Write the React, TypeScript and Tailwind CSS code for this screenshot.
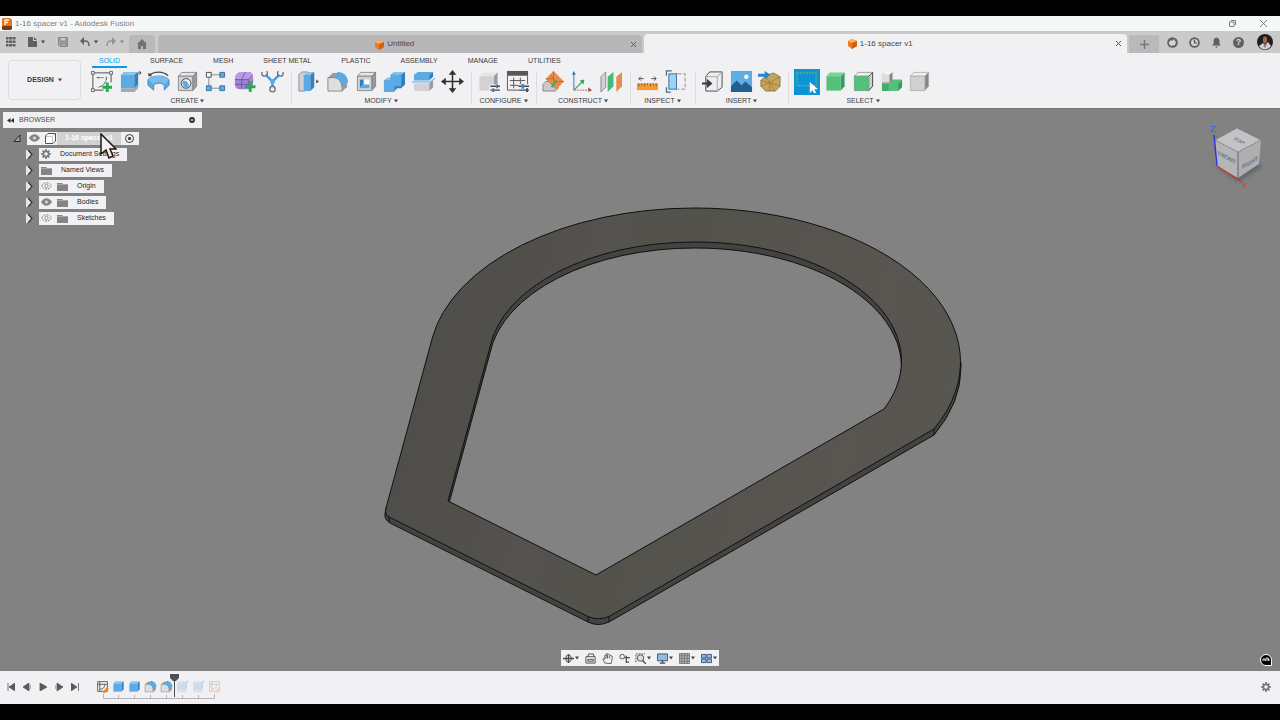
import type { ReactNode } from "react";

const INK = "#4a4a4c";

type IconProps = { children: ReactNode; className?: string; box?: string };

function Svg({ children, className = "size-6", box = "0 0 24 24" }: IconProps) {
  return (
    <svg viewBox={box} className={`${className} shrink-0`} fill="none" aria-hidden="true">
      {children}
    </svg>
  );
}

type CubeProps = { top: string; front: string; side: string; stroke?: string };

function Cube({ top, front, side, stroke = "none" }: CubeProps) {
  return (
    <g stroke={stroke} strokeWidth="0.8" strokeLinejoin="round">
      <path d="M2.500 6.500 6 2.500H21.500L17.500 6.500Z" fill={top} />
      <path d="M17.500 6.500 21.500 2.500V17L17.500 21.500Z" fill={side} />
      <path d="M2.500 6.500H17.500V21.500H2.500Z" fill={front} />
    </g>
  );
}

const GREY = { top: "#e6e6e8", front: "#d2d2d4", side: "#9c9c9e" };
const BLUE = { top: "#86c3ee", front: "#5baae4", side: "#357fbd" };
const GREEN = { top: "#76d497", front: "#55bf7c", side: "#379f5d" };

const icons: Record<string, ReactNode> = {
  sketch: (
    <>
      <path d="M3 20V3h19v10M3 21h11" stroke={INK} strokeWidth="1" />
      <path d="M7 8h7M17 7c1 5-4 11-9 11" stroke={INK} strokeWidth="1" strokeDasharray="4 1" />
      <path d="M1.500 1.500h3v3h-3zM20.500 1.500h3v3h-3zM1.500 19.500h3v3h-3z" fill="#f1f1f3" stroke={INK} strokeWidth="0.8" />
      <path d="M18 13v10M13 18h10" stroke="#27ae4c" strokeWidth="3" />
    </>
  ),
  extrude: (
    <>
      <path d="M2 19h14l4-4v4l-4 4H2Z" fill="#a9a9ab" />
      <path d="M2 5 5 2h15l-4 3Z" fill="#86c3ee" />
      <path d="M2 5h14v14H2Z" fill="#5baae4" />
      <path d="m16 5 4-3v13l-4 4Z" fill="#357fbd" />
      <path d="M20 3h3M21 1l2 2-2 2" stroke={INK} />
    </>
  ),
  revolve: (
    <>
      <path d="M2 6C7 1 17 1 22 6M2 3v3h3" stroke={INK} strokeWidth="1.200" />
      <path d="M1 10c5-5 17-5 22 0v6l-5 5v-5c-3-3-8-3-11 0v5l-6-5Z" fill="#5baae4" stroke="#357fbd" strokeWidth="0.8" />
      <path d="M1 10c5-5 17-5 22 0l-5 5c-3-3-8-3-11 0Z" fill="#79bbea" />
    </>
  ),
  hole: (
    <>
      <Cube {...GREY} stroke="#77777a" />
      <circle cx="10.500" cy="14" r="5" fill="#f4f4f5" stroke={INK} />
      <path d="M7 11c5 0 7 3 6 7-4 2-7-2-6-7Z" fill="#5baae4" />
    </>
  ),
  pattern: (
    <>
      <path d="M7 5h10M5 7v10M7 19h10" stroke="#8b8b8d" />
      <path d="M2.500 2.500h5v5h-5z" fill="#f6f6f6" stroke={INK} />
      <path d="M16.500 2.500h5v5h-5zM2.500 16.500h5v5h-5zM16.500 16.500h5v5h-5z" fill="#5baae4" stroke="#3773a0" />
    </>
  ),
  form: (
    <>
      <path d="M2 10c0-5 3-8 7-8h7c3 0 5 2 5 5v7c0 3-3 6-6 6H7c-3 0-5-2-5-5Z" fill="#a083d2" />
      <path d="M2 10c0-5 3-8 7-8h7c3 0 5 2 5 5-1 0-3 3-5 3Z" fill="#b89be2" />
      <path d="M2 10h14l4-4M9 10v10M16 10v10M9 10l4-8M2 15h14l5-3" stroke="#65509a" strokeWidth="0.8" />
      <path d="M18 12v11M12.500 17.500h11" stroke="#27ae4c" strokeWidth="3" />
    </>
  ),
  derive: (
    <>
      <path d="m5 5 7 7 7-7M12 12v6" stroke="#4a98d5" strokeWidth="2.500" />
      <circle cx="12" cy="12" r="2.500" fill="#5baae4" />
      <circle cx="12" cy="20" r="2.800" fill="#eee" stroke="#5d6f7f" strokeWidth="1.300" />
      <path d="M1 2c-1 4 2 5 4 4s2-3 1-5M23 2c1 4-2 5-4 4s-2-3-1-5" stroke="#667" strokeWidth="1.300" />
    </>
  ),
  presspull: (
    <>
      <path d="M2 5 5 2h6v16l-3 4H2Z" fill="#d2d2d4" stroke="#77777a" strokeWidth="0.800" />
      <path d="M7 5h7v17H7Z" fill="#5baae4" />
      <path d="m7 5 4-3h7l-4 3Z" fill="#86c3ee" />
      <path d="m14 5 4-3v16l-4 4Z" fill="#357fbd" />
      <path d="m20 10 3 2-3 2Z" fill={INK} />
    </>
  ),
  fillet: (
    <>
      <path d="M2 8 7 3h5l10 12v3l-5 4H2Z" fill="#9c9c9e" />
      <path d="M2 8h6c6 0 9 5 9 14H2Z" fill="#dededf" stroke="#77777a" strokeWidth="0.800" />
      <path d="M8 8 12 2c7 0 11 5 11 11l-5 4C17 12 14 8 8 8Z" fill="#5baae4" />
    </>
  ),
  shell: (
    <>
      <Cube {...GREY} stroke="#77777a" />
      <path d="M5 10h10v9H5Z" fill="#fafafa" />
      <path d="M5 10h4v5l-4 4Z" fill="#357fbd" />
      <path d="m5 19 4-4h6v4Z" fill="#5baae4" />
    </>
  ),
  combine: (
    <>
      <path d="m8 5 4-3h11v13l-4 4h-4l-4 4H1V11l4-3h3Z" fill="#357fbd" />
      <path d="M1 11h7V5h11v12h-7v6H1Z" fill="#5baae4" />
      <path d="m1 11 4-3h3V5l4-3h11l-4 3H8v6Z" fill="#86c3ee" />
    </>
  ),
  split: (
    <>
      <path d="m2 5 4-3h16l-4 3v6H2Z" fill="#5baae4" />
      <path d="m18 5 4-3v5l-4 4Z" fill="#357fbd" />
      <path d="M2 14h16v8H2Z" fill="#d2d2d4" />
      <path d="m18 14 4-4v8l-4 4Z" fill="#9c9c9e" />
      <path d="M0 12.500h19l5-4" stroke="#5baae4" />
    </>
  ),
  move: (
    <>
      <path d="M12 3v18M3 12h18" stroke="#303032" strokeWidth="1.600" />
      <path d="m12 0 4 5H8ZM12 24l4-5H8ZM0 12l5-4v8ZM24 12l-5-4v8Z" fill="#303032" />
    </>
  ),
  configure: (
    <>
      <Cube {...GREY} />
      <path d="M13 15h11v9H13z" fill="#f1f1f3" />
      <path d="M14 17h10M14 21h10" stroke={INK} strokeWidth="1.400" />
      <path d="M20 15h2v4h-2zM16 19h2v4h-2z" fill="#397cb1" />
    </>
  ),
  table: (
    <>
      <path d="M1 1h22v5H1Z" fill="#58585a" />
      <path d="M1.500 6v15H13M22.500 6v9M4 11h16M4 16h10M8 8v11M15 8v7" stroke="#58585a" />
      <path d="M13 15h11v9H13z" fill="#f1f1f3" />
      <path d="M13 17h11M13 21h11" stroke={INK} strokeWidth="1.400" />
      <path d="M16 14.500h3v5h-3z" fill="#3492d4" />
      <path d="M21 19h2v4h-2z" fill={INK} />
    </>
  ),
  plane: (
    <>
      <path d="m1 15 3-3h8l5 5v2l-3 3H1Z" fill="#cacacc" stroke="#77777a" strokeWidth="0.800" />
      <path d="m12 1 11 11-8 8L4 9Z" fill="#e88c50" />
      <path d="m4 9 11 11M8 5l11 11M12 1v11l11 0M4 9h8" stroke="#b56532" strokeWidth="0.700" />
      <path d="m10 18 5-7" stroke="#36a960" strokeWidth="2" />
    </>
  ),
  axis: (
    <>
      <path d="M3 21V3" stroke="#3275b8" />
      <path d="m1 5 2-4 2 4Z" fill="#3275b8" />
      <path d="m3 21 9-9" stroke="#36a960" strokeWidth="1.300" />
      <path d="m9 11 5-1-1 5Z" fill="#36a960" />
      <path d="M3 21h15" stroke="#8c6d68" strokeDasharray="2 1" />
      <path d="m18 18 4 3-4 2Z" fill="#a9493c" />
    </>
  ),
  midplane: (
    <>
      <path d="m1 7 5-5v16l-5 5Z" fill="#d2d2d4" stroke="#77777a" strokeWidth="0.800" />
      <path d="m8 7 6-5v15l-6 6Z" fill="#46b877" />
      <path d="m17 7 6-5v15l-6 6Z" fill="#e88c50" />
    </>
  ),
  measure: (
    <>
      <path d="M3 9h5m8 0h5M5 7 3 9l2 2M19 7l2 2-2 2" stroke={INK} />
      <path d="M1 14h22v7H1Z" fill="#f29b38" />
      <path d="M3 14v3m3-3v2m3-2v3m3-3v2m3-2v3m3-3v2m3-2v3" stroke="#91551a" />
    </>
  ),
  section: (
    <>
      <path d="M7 1H1.500v5M1.500 18v5H6" stroke="#476c8c" strokeWidth="1.300" />
      <path d="M4 4h8v16H4Z" fill="#9fd0f2" stroke="#3773a0" />
      <path d="M13 4h8v16h-8" stroke="#8b8b8d" strokeDasharray="4 2" />
      <path d="M12 3v18" stroke="#447ca9" />
    </>
  ),
  insert: (
    <>
      <path d="m5 7 4-5h13v16l-5 4H5Z" fill="#eeeef0" stroke={INK} />
      <path d="M6 7h11v15M17 7l5-5" stroke="#a5a5a7" />
      <path d="M1 13h5V9l6 5-6 5v-4H1Z" fill="#3c3c3e" />
    </>
  ),
  canvas: (
    <>
      <path d="M1 1h22v22H1Z" fill="#5faee3" />
      <path d="m1 17 6-6 5 5 4-4 7 6v5H1Z" fill="#235f91" />
      <circle cx="17" cy="7" r="2.300" fill="#eff8fc" />
    </>
  ),
  mesh: (
    <>
      <path d="m8 6 8-3 7 4v10l-5 5H8l-5-5v-6Z" fill="#c7a45c" stroke="#7b6536" strokeWidth="0.800" />
      <path d="m3 11 9 2 11-6M12 13v9M8 6l4 7 6 9M12 13l11 4M12 13l-9 4" stroke="#8f743b" strokeWidth="0.700" />
      <path d="M0 4h7V1l6 4-6 5V7H0Z" fill="#2788d1" />
    </>
  ),
  select: (
    <>
      <path d="M1 2h21v14H1Z" stroke="#6db66b" strokeWidth="1.200" strokeDasharray="2 1.300" />
      <path d="M15 12v12l3-3 2 4 2-1-2-4h4Z" fill="#fff" />
    </>
  ),
  body: <Cube {...GREEN} />,
  face: (
    <>
      <Cube top="#f2f2f2" front="#55bf7c" side="#d0d0d2" stroke="#8b8b8d" />
      <path d="M2.500 6.500h15v15h-15Z" fill="#55bf7c" />
      <path d="M17.500 6.500 21.500 2.500V17l-4 4.500" stroke="#505052" />
    </>
  ),
  component: (
    <>
      <path d="m2 5 3-3h8v9l-3 3H2Z" fill="#858587" />
      <path d="M2 5h8v8H2Z" fill="#ddddde" />
      <path d="m2 5 3-3h8l-3 3Z" fill="#f5f5f5" />
      <path d="M2 14h20v4l-4 4H2Z" fill="#45ad6c" />
      <path d="m9 14 4-4h10l-4 4v8H9Z" fill="#55bf7c" />
      <path d="m19 14 4-4v8l-4 4Z" fill="#379f5d" />
    </>
  ),
  edge: <Cube top="#eeeeef" front="#d0d2d2" side="#858587" stroke="#aaaaac" />,
};

type Group = { name: string; width: string; tools: [string, string][] };

const groups: Group[] = [
  {
    name: "CREATE",
    width: "w-[195px]",
    tools: [["sketch", "Create Sketch"], ["extrude", "Extrude"], ["revolve", "Revolve"], ["hole", "Hole"], ["pattern", "Pattern"], ["form", "Create Form"], ["derive", "Derive"]],
  },
  {
    name: "MODIFY",
    width: "w-[168px]",
    tools: [["presspull", "Press Pull"], ["fillet", "Fillet"], ["shell", "Shell"], ["combine", "Combine"], ["split", "Split Body"], ["move", "Move"]],
  },
  { name: "CONFIGURE", width: "w-[53px]", tools: [["configure", "Configure"], ["table", "Configuration Table"]] },
  { name: "CONSTRUCT", width: "w-[82px]", tools: [["plane", "Offset Plane"], ["axis", "Axis"], ["midplane", "Midplane"]] },
  { name: "INSPECT", width: "w-[53px]", tools: [["measure", "Measure"], ["section", "Section Analysis"]] },
  { name: "INSERT", width: "w-[81px]", tools: [["insert", "Insert Derive"], ["canvas", "Canvas"], ["mesh", "Insert Mesh"]] },
  { name: "SELECT", width: "w-[138px]", tools: [["select", "Select"], ["body", "Select Body"], ["face", "Select Face"], ["component", "Select Component"], ["edge", "Select Edge"]] },
];

const workspaceTabs = ["SOLID", "SURFACE", "MESH", "SHEET METAL", "PLASTIC", "ASSEMBLY", "MANAGE", "UTILITIES"];

function Caret({ className = "size-1" }: { className?: string }) {
  return (
    <Svg className={className} box="0 0 4 4">
      <path d="M0 .5h4L2 3.500Z" fill="#444446" />
    </Svg>
  );
}

function Logo() {
  return (
    <Svg className="size-[11px]" box="0 0 11 11">
      <path d="m1 3 4-2 5 2v5l-5 3-4-3Z" fill="#ee7b22" />
      <path d="m1 3 4-2 5 2-5 2Z" fill="#ffae62" />
      <path d="M5 5v6l5-3V3Z" fill="#d5600f" />
    </Svg>
  );
}

function TitleBar() {
  return (
    <header className="flex h-[15px] items-center bg-[#f6f8f8] px-[2px] text-[8px] text-[#7c7c7e]">
      <Svg className="mr-[3px] h-3 w-[10px]" box="0 0 10 12">
        <path d="M1 0h7l2 2v9l-2 1H1L0 11V1Z" fill="#e97416" />
        <path d="M0 8h10v3l-2 1H1l-1-1Z" fill="#753817" />
        <path d="M3 7V2h4M3 4.500h3" stroke="#fff1df" strokeWidth="1.300" />
      </Svg>
      <h1 className="flex-1">1-16 spacer v1 - Autodesk Fusion</h1>
      <button aria-label="Restore" className="mr-6">
        <Svg className="size-[7px]" box="0 0 7 7">
          <path d="M.5 2h4.500v4.500H.5ZM2 .5h4.500V5" stroke="#737375" strokeWidth="0.900" />
        </Svg>
      </button>
      <button aria-label="Close" className="mr-[11px]">
        <Svg className="size-[7px]" box="0 0 7 7">
          <path d="m0 0 7 7M7 0 0 7" stroke="#737375" strokeWidth="0.900" />
        </Svg>
      </button>
    </header>
  );
}

function DocumentBar() {
  return (
    <div className="flex h-[22px] items-end bg-[#cacacb]">
      <div className="flex h-full w-[129px] shrink-0 items-center pl-[6px]">
        <button aria-label="Show Data Panel">
          <Svg className="size-[10px]" box="0 0 10 10">
            <path d="M0 0h2.500v2.500H0zM3 0H6v2.500H3zM6.500 0h3v2.500h-3zM0 3.500h2.500V6H0zM3 3.500H6V6H3zM6.500 3.500h3V6h-3zM0 7h2.500v2.500H0zM3 7H6v2.500H3zM6.500 7h3v2.500h-3z" fill="#606062" />
          </Svg>
        </button>
        <button aria-label="File" className="ml-3 flex items-center gap-1">
          <Svg className="h-[10px] w-[9px]" box="0 0 9 10">
            <path d="M0 0h5v4h4v6H0Zm6 0 3 3H6Z" fill="#606062" />
          </Svg>
          <Caret />
        </button>
        <button aria-label="Save" className="ml-[13px]">
          <Svg className="size-[10px]" box="0 0 10 10">
            <path d="M.5.5h9v9H2L.5 8ZM2 1v3h6V1M3 9V6h5v3" fill="#a8a8aa" stroke="#858587" />
          </Svg>
        </button>
        <button aria-label="Undo" className="ml-3 flex items-center gap-1">
          <Svg className="size-[10px]" box="0 0 10 10">
            <path d="M1 4h4c3 0 4 1 4 5" stroke="#606062" strokeWidth="1.500" />
            <path d="M0 4 4 0v8Z" fill="#606062" />
          </Svg>
          <Caret />
        </button>
        <button aria-label="Redo" className="ml-2 flex items-center gap-1 opacity-50">
          <Svg className="size-[10px]" box="0 0 10 10">
            <path d="M9 4H5C2 4 1 5 1 9" stroke="#606062" strokeWidth="1.500" />
            <path d="M10 4 6 0v8Z" fill="#606062" />
          </Svg>
          <Caret />
        </button>
      </div>
      <button aria-label="Home" className="flex h-[18px] w-[26px] items-center justify-center rounded-t-sm bg-[#b9b9bb]">
        <Svg className="size-[10px]" box="0 0 10 10">
          <path d="m0 5 5-5 5 5H9v5H6V7H4v3H1V5Z" fill="#707072" />
        </Svg>
      </button>
      <nav className="ml-[3px] flex flex-1 items-end gap-[2px] text-[8px] text-[#48484a]">
        <div className="flex h-[18px] flex-1 items-center rounded-t-sm bg-[#b7b7b9] pr-[6px]">
          <a href="#untitled" className="flex flex-1 items-center justify-center gap-[2px]">
            <Logo /> Untitled
          </a>
          <button aria-label="Close Untitled" className="leading-none">
            <Svg className="size-[5px]" box="0 0 5 5"><path d="m0 0 5 5M5 0 0 5" stroke="#59595b" /></Svg>
          </button>
        </div>
        <div className="flex h-[19px] flex-1 items-center rounded-t-sm bg-[#f1f1f3] pr-[6px]">
          <a href="#spacer" aria-current="page" className="flex flex-1 items-center justify-center gap-[2px]">
            <Logo /> 1-16 spacer v1
          </a>
          <button aria-label="Close 1-16 spacer v1" className="leading-none">
            <Svg className="size-[5px]" box="0 0 5 5"><path d="m0 0 5 5M5 0 0 5" stroke="#59595b" /></Svg>
          </button>
        </div>
      </nav>
      <button aria-label="New design" className="ml-[2px] flex h-[18px] w-[30px] items-center justify-center bg-[#b9b9bb]">
        <Svg className="size-[9px]" box="0 0 9 9"><path d="M0 4.500h9M4.500 0v9" stroke="#77777a" strokeWidth="1.500" /></Svg>
      </button>
      <div className="ml-2 flex h-full w-[113px] shrink-0 items-center gap-[11px]">
        <button aria-label="Extensions">
          <Svg className="size-[11px]" box="0 0 11 11">
            <circle cx="5.500" cy="5.500" r="5.300" fill="#606062" />
            <path d="M2 5 4 3l1 1 2-2 1 2 1 1-1 3-4 1-2-2Z" fill="#d4d4d4" />
          </Svg>
        </button>
        <button aria-label="Job Status">
          <Svg className="size-[11px]" box="0 0 11 11">
            <circle cx="5.500" cy="5.500" r="5.300" fill="#606062" />
            <circle cx="5.500" cy="5.500" r="3.500" fill="#d4d4d4" />
            <path d="M5.500 2.500V6H8" stroke="#505052" strokeWidth="1.200" />
          </Svg>
        </button>
        <button aria-label="Notifications">
          <Svg className="size-[11px]" box="0 0 11 11">
            <path d="M1 8.500 2.500 7V4c0-2 1-3 3-3.500 2 .5 3 1.500 3 3.500v3L10 8.500ZM4 9.500h3L5.500 11Z" fill="#606062" />
          </Svg>
        </button>
        <button aria-label="Help" className="flex size-[11px] items-center justify-center rounded-full bg-[#606062] text-[9px] leading-none font-bold text-[#dededf]">
          ?
        </button>
        <button aria-label="Account" className="ml-[2px]">
          <Svg className="size-4" box="0 0 16 16">
            <circle cx="8" cy="8" r="8" fill="#241d1d" />
            <path d="M6 4c1-2 4-2 4 1v3L8 10 6 8Z" fill="#9f654e" />
            <path d="m2 12 4-3 2 2 3-3 3 4c-3 4-9 5-12 0Z" fill="#d5d0ce" />
            <path d="m6 11 2 3 2-4Z" fill="#8d776d" />
          </Svg>
        </button>
      </div>
    </div>
  );
}

function Ribbon() {
  return (
    <div className="flex h-14 items-start border-b border-[#77777a] bg-[#f1f1f3] text-[7px] text-[#39393b]">
      <button className="mt-[7px] ml-2 flex h-10 w-[73px] shrink-0 items-center justify-center gap-1 rounded-sm border border-[#dcdcde] font-bold">
        DESIGN <Caret />
      </button>
      <div className="ml-[9px] flex flex-col">
        <nav className="ml-[2px] flex h-[15px] gap-4">
          {workspaceTabs.map((tab, i) => (
            <a
              key={tab}
              href="#ribbon"
              className={
                i === 0
                  ? "border-b-2 border-[#109bd7] px-[7px] leading-[15px] text-[#109bd7]"
                  : "border-b-2 border-transparent px-[7px] leading-[15px] whitespace-nowrap"
              }
            >
              {tab}
            </a>
          ))}
        </nav>
        <div className="flex">
          {groups.map((group, i) => (
            <div key={group.name} className="flex">
              {i > 0 && <div className="mt-[3px] mr-[5px] ml-[6px] h-[34px] w-px bg-[#dddddf]" />}
              <div className={`${group.width} flex flex-col items-center`}>
                <div className="flex h-[27px] w-full items-center justify-between">
                  {group.tools.map(([icon, label]) => (
                    <button
                      key={icon}
                      aria-label={label}
                      className={icon === "select" ? "flex h-[26px] w-[26px] items-center justify-center bg-[#0e94d6]" : "flex size-6"}
                    >
                      <Svg className={icon === "select" ? "size-[22px]" : "size-[23px]"}>{icons[icon]}</Svg>
                    </button>
                  ))}
                </div>
                <button className="flex h-3 items-center gap-[2px] leading-3">
                  {group.name} <Caret />
                </button>
              </div>
            </div>
          ))}
        </div>
      </div>
    </div>
  );
}

const OUTER_TOP =
  "M432 339A266 154 0 0 1 695 208A266 154 0 0 1 934 429L609 616.500Q598 621 588 616.500L389 517Q384 514 386 508Z";
const OUTER_SIDE =
  "M386 508 385 514Q384 519 390 523L588 622Q598 627 609 622L934 435A266 154 0 0 0 961 367V362Z";
const INNER = "M490 347A206 119 0 0 1 695 242A206 119 0 0 1 884 409L596 575 448 501Z";

function Model() {
  return (
    <svg viewBox="0 109 1280 562" preserveAspectRatio="xMidYMid slice" className="absolute inset-0 size-full" role="img" aria-label="Spacer model">
      <defs>
        <linearGradient id="face" gradientUnits="userSpaceOnUse" x1="420" y1="300" x2="950" y2="440">
          <stop offset="0" stopColor="#4f4e4b" />
          <stop offset="0.150" stopColor="#514f4a" />
          <stop offset="0.300" stopColor="#55524f" />
          <stop offset="0.480" stopColor="#53524b" />
          <stop offset="0.650" stopColor="#575450" />
          <stop offset="0.820" stopColor="#595550" />
          <stop offset="1" stopColor="#575650" />
        </linearGradient>
        <clipPath id="opening">
          <path d={INNER} />
        </clipPath>
      </defs>
      <path d={OUTER_SIDE} fill="#434342" stroke="#101010" />
      <path d={OUTER_TOP} fill="url(#face)" stroke="#101010" />
      <path d="M588 617v5M609 617v5M934 429v6M389 517v5" stroke="#101010" />
      <g clipPath="url(#opening)">
        <path d={INNER} fill="#434342" />
        <path d={INNER} transform="translate(0 6)" fill="#828283" stroke="#101010" />
      </g>
      <path d={INNER} fill="none" stroke="#101010" />
    </svg>
  );
}

function Eye({ hidden = false }: { hidden?: boolean }) {
  return (
    <Svg className="h-2 w-[11px]" box="0 0 11 8">
      <path d="M.5 4C3-.3 8-.3 10.500 4 8 8.300 3 8.300.5 4Z" fill={hidden ? "none" : "#858587"} stroke="#858587" strokeDasharray={hidden ? "2 1" : undefined} />
      <circle cx="5.500" cy="4" r="1.700" fill={hidden ? "none" : "#eee"} stroke="#858587" strokeWidth="0.800" />
    </Svg>
  );
}

function Folder() {
  return (
    <Svg className="h-[9px] w-[11px]" box="0 0 11 9">
      <path d="M0 1h5l1 1h5v7H0Z" fill="#858587" />
      <path d="M0 2.500h11" stroke="#b9b9bb" strokeWidth="0.700" />
    </Svg>
  );
}

function Gear({ className = "size-[10px]" }: { className?: string }) {
  return (
    <Svg className={className} box="0 0 12 12">
      <path d="M6 0v12M0 6h12M1.800 1.800l8.400 8.400M10.200 1.800l-8.400 8.400" stroke="#77777a" strokeWidth="2" />
      <circle cx="6" cy="6" r="3.200" fill="#f1f1f3" stroke="#77777a" strokeWidth="2" />
    </Svg>
  );
}

type TreeItem = { label: string; icon: "gear" | "folder"; eye?: "on" | "off" };

const tree: TreeItem[] = [
  { label: "Document Settings", icon: "gear" },
  { label: "Named Views", icon: "folder" },
  { label: "Origin", icon: "folder", eye: "off" },
  { label: "Bodies", icon: "folder", eye: "on" },
  { label: "Sketches", icon: "folder", eye: "off" },
];

function Browser() {
  return (
    <aside className="absolute top-[3px] left-[3px] w-[199px] text-[7px] text-[#252527]">
      <div className="flex h-4 items-center bg-[#f1f1f3] px-1">
        <button aria-label="Collapse browser">
          <Svg className="h-[5px] w-[7px]" box="0 0 7 5"><path d="M3.500 0v5L0 2.500ZM7 0v5L3.500 2.500Z" fill="#303032" /></Svg>
        </button>
        <h2 className="ml-[5px] flex-1 text-[#4a4a4c]">BROWSER</h2>
        <button aria-label="Browser options" className="mr-[3px]">
          <Svg className="size-[6px]" box="0 0 6 6"><circle cx="3" cy="3" r="3" fill="#303032" /><path d="M1.500 3h3" stroke="#fff" /></Svg>
        </button>
      </div>
      <ul className="mt-[2px]">
        <li className="flex h-4 items-center">
          <button aria-label="Collapse component" className="ml-[10px]">
            <Svg className="size-2" box="0 0 8 8"><path d="M1 7.500h6V1Z" fill="#a5a5a7" stroke="#262628" /></Svg>
          </button>
          <div className="ml-[6px] flex h-[13px] items-center bg-[#f1f1f3] pl-[2px]">
            <Eye />
            <div className="ml-1 flex h-full items-center bg-[#d2d2d3]">
              <Svg className="size-[13px] bg-[#f1f1f3]" box="0 0 13 13">
                <path d="M1.500 4 4 1.500h7.500V9L9 11.500H1.500Z" fill="#fff" stroke="#515153" />
                <path d="M2 4.500h6.500V11M8.500 4.500l2.500-2.500" stroke="#b5b5b7" strokeWidth="0.700" />
              </Svg>
              <span className="px-2 font-bold whitespace-nowrap text-white">1-16 spacer v1</span>
            </div>
            <input type="radio" defaultChecked aria-label="Activate component" className="mr-[5px] ml-1 size-[9px] appearance-none rounded-full border border-[#39393b] bg-[radial-gradient(#39393b_25%,transparent_35%)]" />
          </div>
        </li>
        {tree.map((item) => (
          <li key={item.label} className="flex h-4 items-center pl-[22px]">
            <button aria-label={`Expand ${item.label}`}>
              <Svg className="h-[9px] w-2" box="0 0 8 9"><path d="M1 0h2l4 4.500L3 9H1Z" fill="#e5e5e7" /><path d="m3 0 4 4.500L3 9" stroke="#303032" strokeWidth="1.200" /></Svg>
            </button>
            <div className="ml-[6px] flex h-[13px] items-center bg-[#f1f1f3] pr-2 pl-[2px]">
              {item.eye && <span className="mr-[5px]"><Eye hidden={item.eye === "off"} /></span>}
              {item.icon === "gear" ? <Gear /> : <Folder />}
              <span className="ml-[9px] whitespace-nowrap">{item.label}</span>
            </div>
          </li>
        ))}
      </ul>
    </aside>
  );
}

function ViewCube() {
  return (
    <svg viewBox="0 0 70 76" className="absolute top-3 right-0 h-[76px] w-[70px]" role="img" aria-label="View cube">
      <defs>
        <filter id="soft" x="-20%" y="-20%" width="140%" height="140%">
          <feGaussianBlur stdDeviation="2" />
        </filter>
      </defs>
      <path d="m4 44 24 17 24-15-4-5Z" fill="#656567" filter="url(#soft)" />
      <path d="M27 7 51 19 28 31 5 19Z" fill="#c2c3c4" />
      <path d="M5 19 28 31V57L6 45Z" fill="#b4b5b6" />
      <path d="M51 19 28 31V57L49 43Z" fill="#aeafb0" />
      <path d="M27 7 51 19 28 31 5 19Z" fill="none" stroke="#77777a" strokeWidth="0.800" strokeDasharray="3 1" />
      <path d="M28 31v26" stroke="#666668" />
      <g fill="#707173" fontWeight="bold">
        <text transform="matrix(.86 .45 0 1 8 34)" fontSize="6">FRONT</text>
        <text transform="matrix(.86 -.48 0 1 32 48)" fontSize="6">RIGHT</text>
        <text transform="matrix(.86 .42 -.8 .42 22 18)" fontSize="6">TOP</text>
      </g>
      <path d="m4 14 3 31" stroke="#3036d5" strokeWidth="1.500" />
      <path d="m7 45 25 16" stroke="#c73535" strokeWidth="1.200" />
      <text x="0" y="11" fill="#4565dc" fontSize="9" fontWeight="bold">Z</text>
      <text x="32" y="67" fill="#d44747" fontSize="8" fontWeight="bold">X</text>
    </svg>
  );
}

const navTools: { name: string; menu: boolean; art: ReactNode }[] = [
  { name: "Orbit", menu: true, art: <><path d="M0 6h12M6 1v10" stroke={INK} strokeWidth="1.500" /><ellipse cx="6" cy="6" rx="3" ry="4" stroke={INK} /></> },
  { name: "Look At", menu: false, art: <><path d="M1 4h10v7H1ZM3 4l1-3h5l1 3M3 7h6v2H3Z" stroke={INK} /></> },
  { name: "Pan", menu: false, art: <path d="M3 11 1 7c0-1 1-1 2 0V3c0-1 1-1 1.500 0V1.500C5-.5 6 .5 6 1.500c1-1 2 0 2 1 1-1 2 0 2 1 1-1 1.500 0 1 3l-1 5ZM4.500 3v3M6 2v4M8 3v3" stroke={INK} strokeWidth="0.900" /> },
  { name: "Zoom", menu: false, art: <><circle cx="3.500" cy="4" r="2.500" stroke={INK} /><path d="M6 5h6M8 3v8M8 10h3" stroke={INK} strokeWidth="1.300" /></> },
  { name: "Fit", menu: true, art: <><path d="M1 10V1h10" stroke={INK} strokeDasharray="2 1" /><circle cx="6" cy="5.500" r="3.500" fill="#ddd" stroke={INK} /><path d="m8 8 4 4" stroke={INK} strokeWidth="1.500" /></> },
  { name: "Display Settings", menu: true, art: <><path d="M.5 1h11v7.500H.5Z" fill="#8eb9ed" stroke={INK} /><path d="M3 11h6M6 8v3" stroke={INK} strokeWidth="1.500" /></> },
  { name: "Grid and Snaps", menu: true, art: <path d="M.5.5h11v11H.5ZM3 0v12M6 0v12M9 0v12M0 3h12M0 6h12M0 9h12" fill="#b4b4b6" stroke="#727274" strokeWidth="0.900" /> },
  { name: "Viewports", menu: true, art: <path d="M.5 1.500H5.500V5.500H.5ZM6.500 1.500h5v4h-5ZM.5 6.500h5v4h-5ZM6.500 6.500h5v4h-5Z" fill="#8eb9ed" stroke="#3c5576" /> },
];

function NavBar() {
  return (
    <div className="absolute bottom-[5px] left-1/2 flex h-4 w-[158px] -translate-x-1/2 items-center justify-between bg-[#f1f1f3] px-[2px]">
      {navTools.map((tool) => (
        <button key={tool.name} aria-label={tool.name} className="flex items-center gap-px">
          <Svg className="size-[11px]" box="0 0 12 12">{tool.art}</Svg>
          {tool.menu && <Caret />}
        </button>
      ))}
    </div>
  );
}

const transport: [string, string][] = [
  ["Go to start", "M1 0v8M8 0v8L2 4Z"],
  ["Step back", "M6 0v8L0 4ZM8 2v4"],
  ["Play", "M1 0v8l7-4Z"],
  ["Step forward", "M2 0v8l6-4ZM0 2v4"],
  ["Go to end", "M0 0v8l6-4ZM7.500 0v8"],
];

const sketchArt = (
  <>
    <path d="M3 3h18v18H3ZM7 3v18M3 8h18M7 17c7 0 9-4 9-9" stroke={INK} strokeWidth="1.500" />
    <path d="m13 21 7-8 4 3-7 8-4 1Z" fill="#f08a2e" />
  </>
);

const features: { name: string; art: ReactNode; dim?: boolean }[] = [
  { name: "Sketch 1", art: sketchArt },
  { name: "Extrude 1", art: <Cube {...BLUE} /> },
  { name: "Extrude 2", art: <Cube {...BLUE} /> },
  { name: "Fillet 1", art: icons.fillet },
  { name: "Fillet 2", art: icons.fillet },
  { name: "Extrude 3", art: icons.extrude, dim: true },
  { name: "Extrude 4", art: icons.extrude, dim: true },
  { name: "Sketch 2", art: sketchArt, dim: true },
];

function Timeline() {
  return (
    <footer className="flex h-[33px] items-center bg-[#f1f1f3] pb-px pl-[3px]">
      <div className="flex">
        {transport.map(([name, d]) => (
          <button key={name} aria-label={name} className="flex size-4 items-center justify-center">
            <Svg className="size-2" box="0 0 8 8"><path d={d} fill="#59595b" stroke="#59595b" strokeWidth="0.800" /></Svg>
          </button>
        ))}
      </div>
      <div className="relative ml-[11px] pt-[3px]">
        <div className="flex">
          {features.map((f) => (
            <button key={f.name} aria-label={f.name} className={f.dim ? "flex h-4 w-4 items-center justify-center opacity-25" : "flex h-4 w-4 items-center justify-center"}>
              <Svg className="size-[13px]">{f.art}</Svg>
            </button>
          ))}
        </div>
        <Svg className="h-[5px] w-32" box="0 0 128 5">
          <path d="M9.500 0v4.500h111V0M24.500 1v3M40.500 1v3M56.500 1v3M72.500 1v3M88.500 1v3M104.500 1v3" stroke="#b5b5b7" />
        </Svg>
        <Svg className="absolute -top-px left-[76px] h-[23px] w-[9px]" box="0 0 9 23">
          <path d="M0 0h9v4L6 7H3L0 4Z" fill="#505052" />
          <path d="M4.500 5v18" stroke="#505052" />
        </Svg>
      </div>
      <button aria-label="Timeline settings" className="mr-[9px] ml-auto"><Gear /></button>
    </footer>
  );
}

export default function App() {
  return (
    <div className="flex min-h-screen flex-col border-y-[16px] border-black bg-[#f1f1f3] font-['Liberation_Sans',Arial,sans-serif]">
      <TitleBar />
      <DocumentBar />
      <Ribbon />
      <main className="relative flex-1 overflow-hidden bg-[#828283]">
        <Model />
        <Browser />
        <ViewCube />
        <NavBar />
        <button aria-label="Assistant" className="absolute right-2 bottom-[5px] flex size-3 items-center justify-center rounded-full rounded-br-none border border-white bg-black">
          <Svg className="size-2" box="0 0 8 8"><path d="M1 5V3h2v2M4 5V2h2v3M6 3h1v2" stroke="#fff" strokeWidth="0.900" /></Svg>
        </button>
        <Svg className="absolute top-6 left-[100px] h-[26px] w-[17px]" box="0 0 17 26">
          <path d="M1 1v20l5-4 3 8 4-2-3-7h6Z" fill="#f8f1ef" stroke="#19191b" strokeWidth="1.500" />
        </Svg>
      </main>
      <Timeline />
    </div>
  );
}
